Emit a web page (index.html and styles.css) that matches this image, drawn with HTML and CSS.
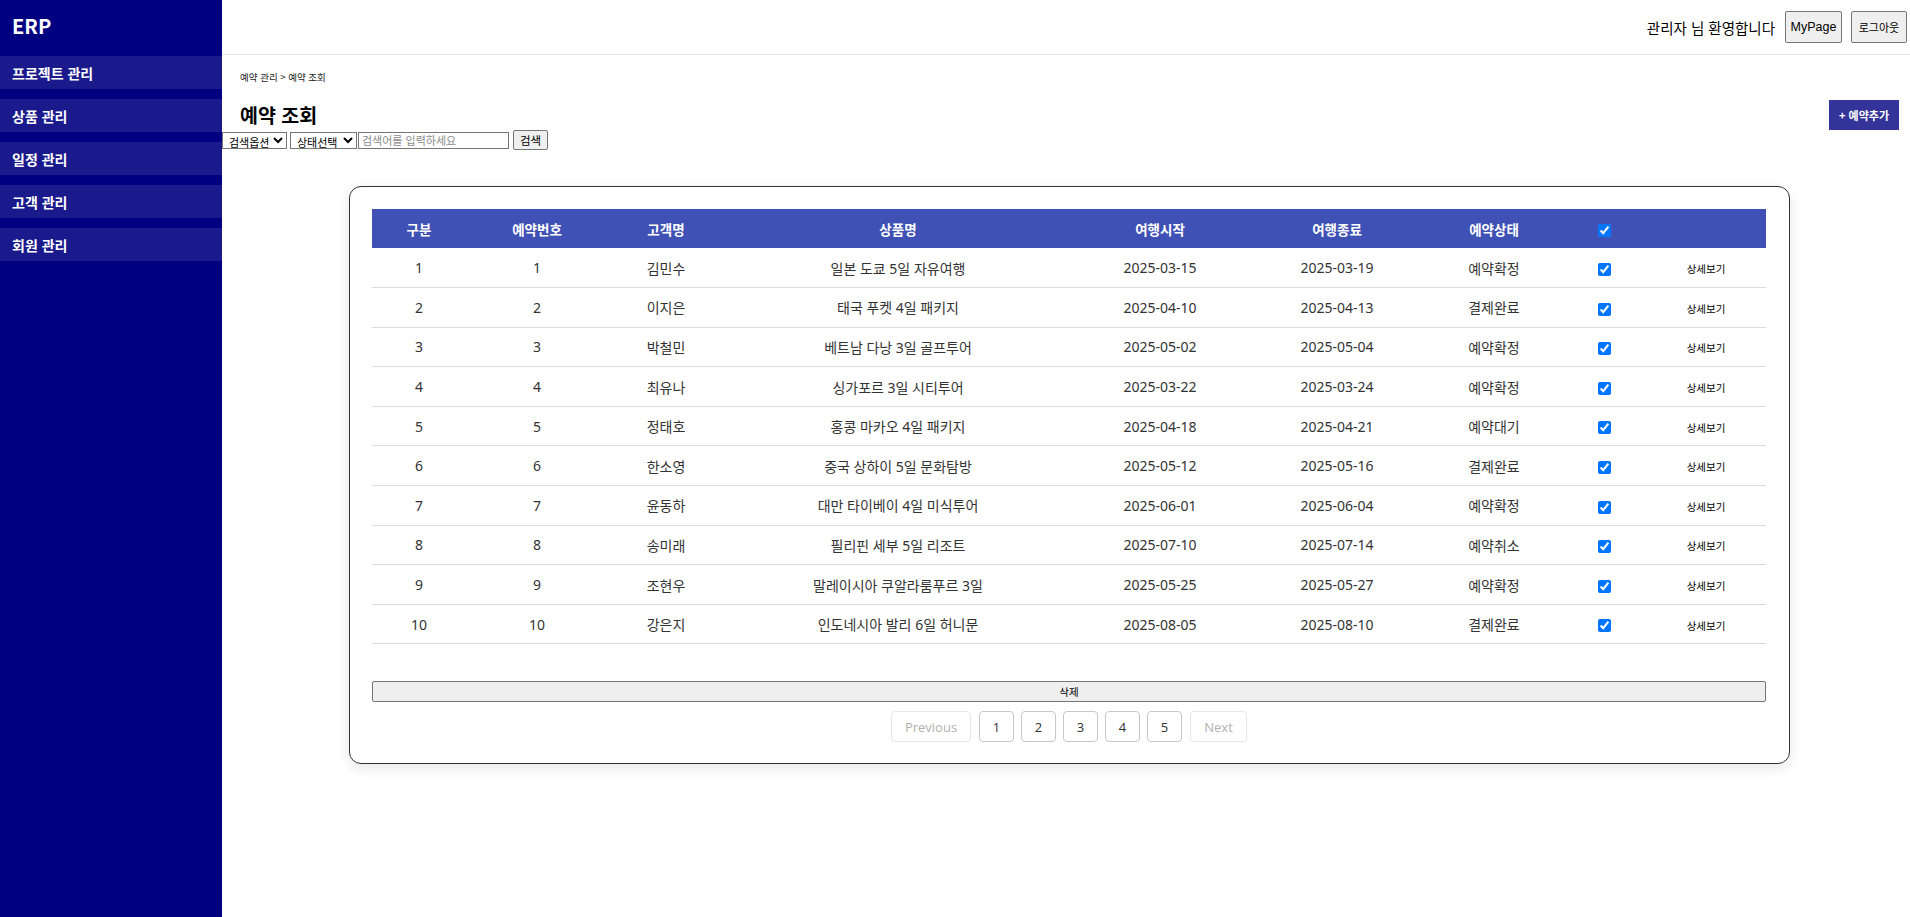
FILE: index.html
```html
<!DOCTYPE html>
<html lang="ko">
<head>
<meta charset="utf-8">
<title>예약 조회</title>
<link rel="stylesheet" href="styles.css">
</head>
<body>
<aside class="sidebar">
  <div class="logo">ERP</div>
  <nav class="menu">
    <a class="menu-item">프로젝트 관리</a>
    <a class="menu-item">상품 관리</a>
    <a class="menu-item">일정 관리</a>
    <a class="menu-item">고객 관리</a>
    <a class="menu-item">회원 관리</a>
  </nav>
</aside>
<main class="main">
  <header class="topbar">
    <span class="welcome">관리자 님 환영합니다</span>
    <button class="top-btn top-btn-en">MyPage</button>
    <button class="top-btn top-btn-ko">로그아웃</button>
  </header>
  <section class="page-head">
    <div class="breadcrumb">예약 관리 &gt; 예약 조회</div>
    <div class="title-row">
      <h2 class="title">예약 조회</h2>
      <button class="add-btn">+ 예약추가</button>
    </div>
  </section>
  <div class="filters">
    <select class="sel sel-1"><option>검색옵션</option></select>
    <select class="sel sel-2"><option>상태선택</option></select>
    <input class="search-input" type="text" placeholder="검색어를 입력하세요">
    <button class="search-btn">검색</button>
  </div>
  <div class="card">
    <table class="grid">
      <thead>
        <tr>
          <th class="c1">구분</th>
          <th class="c2">예약번호</th>
          <th class="c3">고객명</th>
          <th class="c4">상품명</th>
          <th class="c5">여행시작</th>
          <th class="c6">여행종료</th>
          <th class="c7">예약상태</th>
          <th class="c8"><input type="checkbox" checked></th>
          <th class="c9"></th>
        </tr>
      </thead>
      <tbody>
        <tr><td>1</td><td>1</td><td>김민수</td><td>일본 도쿄 5일 자유여행</td><td>2025-03-15</td><td>2025-03-19</td><td>예약확정</td><td><input type="checkbox" checked></td><td><button class="detail">상세보기</button></td></tr>
        <tr><td>2</td><td>2</td><td>이지은</td><td>태국 푸켓 4일 패키지</td><td>2025-04-10</td><td>2025-04-13</td><td>결제완료</td><td><input type="checkbox" checked></td><td><button class="detail">상세보기</button></td></tr>
        <tr><td>3</td><td>3</td><td>박철민</td><td>베트남 다낭 3일 골프투어</td><td>2025-05-02</td><td>2025-05-04</td><td>예약확정</td><td><input type="checkbox" checked></td><td><button class="detail">상세보기</button></td></tr>
        <tr><td>4</td><td>4</td><td>최유나</td><td>싱가포르 3일 시티투어</td><td>2025-03-22</td><td>2025-03-24</td><td>예약확정</td><td><input type="checkbox" checked></td><td><button class="detail">상세보기</button></td></tr>
        <tr><td>5</td><td>5</td><td>정태호</td><td>홍콩 마카오 4일 패키지</td><td>2025-04-18</td><td>2025-04-21</td><td>예약대기</td><td><input type="checkbox" checked></td><td><button class="detail">상세보기</button></td></tr>
        <tr><td>6</td><td>6</td><td>한소영</td><td>중국 상하이 5일 문화탐방</td><td>2025-05-12</td><td>2025-05-16</td><td>결제완료</td><td><input type="checkbox" checked></td><td><button class="detail">상세보기</button></td></tr>
        <tr><td>7</td><td>7</td><td>윤동하</td><td>대만 타이베이 4일 미식투어</td><td>2025-06-01</td><td>2025-06-04</td><td>예약확정</td><td><input type="checkbox" checked></td><td><button class="detail">상세보기</button></td></tr>
        <tr><td>8</td><td>8</td><td>송미래</td><td>필리핀 세부 5일 리조트</td><td>2025-07-10</td><td>2025-07-14</td><td>예약취소</td><td><input type="checkbox" checked></td><td><button class="detail">상세보기</button></td></tr>
        <tr><td>9</td><td>9</td><td>조현우</td><td>말레이시아 쿠알라룸푸르 3일</td><td>2025-05-25</td><td>2025-05-27</td><td>예약확정</td><td><input type="checkbox" checked></td><td><button class="detail">상세보기</button></td></tr>
        <tr><td>10</td><td>10</td><td>강은지</td><td>인도네시아 발리 6일 허니문</td><td>2025-08-05</td><td>2025-08-10</td><td>결제완료</td><td><input type="checkbox" checked></td><td><button class="detail">상세보기</button></td></tr>
      </tbody>
    </table>
    <button class="delete-btn">삭제</button>
    <nav class="pager">
      <button class="pg pg-text pg-prev" disabled>Previous</button>
      <button class="pg pg-num">1</button>
      <button class="pg pg-num">2</button>
      <button class="pg pg-num">3</button>
      <button class="pg pg-num">4</button>
      <button class="pg pg-num">5</button>
      <button class="pg pg-text pg-next" disabled>Next</button>
    </nav>
  </div>
</main>
</body>
</html>
```

FILE: styles.css
```css
* { box-sizing: border-box; }

html, body {
  margin: 0;
  height: 100%;
}

body {
  display: flex;
  font-family: "Noto Sans", "Noto Sans CJK KR", sans-serif;
  color: #000;
  background: #fff;
}

.sidebar {
  width: 222px;
  flex: 0 0 222px;
  min-height: 917px;
  background: #000080;
  color: #fff;
}

.logo {
  height: 56px;
  padding: 13px 12px 0;
  font-size: 20px;
  line-height: 26px;
  font-weight: 700;
  font-family: "Noto Sans CJK KR", sans-serif;
}

.menu {
  display: flex;
  flex-direction: column;
  gap: 10px;
}

.menu-item {
  display: flex;
  align-items: center;
  height: 33px;
  padding: 0 12px;
  background: rgba(255, 255, 255, 0.1);
  font-family: "Noto Sans CJK KR", sans-serif;
  font-size: 14px;
  font-weight: 700;
  color: #fff;
}

.main {
  flex: 1;
  min-width: 0;
}

.topbar {
  height: 55px;
  border-bottom: 1px solid #e3e3e3;
  display: flex;
  align-items: center;
  justify-content: flex-end;
  padding: 0 3px 0 0;
  gap: 9px;
}

.welcome {
  font-family: "Noto Sans CJK KR", sans-serif;
  font-size: 14.5px;
  margin-right: 1px;
  color: #000;
}

.top-btn {
  height: 32px;
  padding: 0;
  background: #efefef;
  border: 1px solid #767676;
  border-radius: 2px;
  color: #000;
}

.top-btn-en {
  width: 57px;
  font-family: "Liberation Sans", sans-serif;
  font-size: 12.5px;
}

.top-btn-ko {
  width: 56px;
  font-family: "Noto Sans CJK KR", sans-serif;
  font-size: 11px;
}

.page-head {
  padding: 14px 11px 0 18px;
}

.breadcrumb {
  font-family: "Noto Sans CJK KR", sans-serif;
  font-size: 9.5px;
  line-height: 16px;
  color: #222;
}

.title-row {
  display: flex;
  justify-content: space-between;
  align-items: center;
  margin-top: 15px;
  height: 30px;
}

.title {
  margin: 0;
  font-family: "Noto Sans CJK KR", sans-serif;
  font-size: 19.5px;
  font-weight: 700;
  line-height: 30px;
}

.add-btn {
  width: 70px;
  height: 30px;
  padding: 0;
  background: #333399;
  color: #fff;
  border: none;
  font-family: "Noto Sans CJK KR", sans-serif;
  font-size: 11px;
  font-weight: 700;
}

.filters {
  display: flex;
  align-items: center;
  height: 20px;
}

.sel {
  height: 17px;
  padding: 0 0 0 2px;
  font-family: "Noto Sans CJK KR", sans-serif;
  font-size: 11px;
  line-height: 14px;
  border: 1px solid #767676;
  border-radius: 0;
  background: #fff;
  color: #000;
}

.sel-1 { width: 65px; }
.sel-2 { width: 67px; margin-left: 3px; }

.search-input {
  width: 151px;
  height: 17px;
  margin-left: 1px;
  padding: 0 3px;
  font-family: "Noto Sans CJK KR", sans-serif;
  font-size: 11px;
  border: 1px solid #767676;
}

.search-input::placeholder { color: #8a8a8a; }

.search-btn {
  width: 35px;
  height: 20px;
  margin-left: 4px;
  padding: 0;
  font-family: "Noto Sans CJK KR", sans-serif;
  font-size: 11.5px;
  background: #efefef;
  border: 1px solid #767676;
  border-radius: 2px;
  color: #000;
}

.card {
  width: 1441px;
  margin: 36px 0 40px 127px;
  padding: 22px 23px 21px 22px;
  border: 1px solid #333;
  border-radius: 12px;
  box-shadow: 0 4px 14px rgba(0, 0, 0, 0.1);
  background: #fff;
}

.grid {
  width: 100%;
  border-collapse: collapse;
  table-layout: fixed;
  font-size: 14px;
  color: #333;
}

.grid th {
  height: 39px;
  background: #3f51b5;
  color: #fff;
  font-weight: 600;
  font-family: "Noto Sans CJK KR", sans-serif;
  font-size: 13.5px;
  text-align: center;
  padding: 0;
}

.grid td {
  height: 39.6px;
  border-bottom: 1px solid #dcdcdc;
  text-align: center;
  padding: 0;
  font-family: "Noto Sans", "Noto Sans CJK KR", sans-serif;
}

.grid input[type="checkbox"] {
  width: 13px;
  height: 13px;
  margin: 0;
  vertical-align: middle;
}

.c1 { width: 94px; }
.c2 { width: 142px; }
.c3 { width: 116px; }
.c4 { width: 348px; }
.c5 { width: 176px; }
.c6 { width: 178px; }
.c7 { width: 136px; }
.c8 { width: 84px; }
.c9 { width: 120px; }

.detail {
  background: transparent;
  border: none;
  padding: 0;
  font-family: "Noto Sans CJK KR", sans-serif;
  font-size: 10.5px;
  color: #000;
}

.delete-btn {
  display: block;
  width: 100%;
  height: 21px;
  margin-top: 37px;
  padding: 0;
  background: #efefef;
  border: 1px solid #767676;
  border-radius: 2px;
  font-family: "Noto Sans CJK KR", sans-serif;
  font-size: 10.5px;
  line-height: 18px;
  color: #000;
}

.pager {
  display: flex;
  justify-content: center;
  gap: 7px;
  margin-top: 9px;
}

.pg {
  height: 31px;
  background: #fff;
  border: 1px solid #c8c8c8;
  border-radius: 4px;
  font-family: "Open Sans", sans-serif;
  font-size: 13px;
  color: #333;
  padding: 0;
}

.pg-num { width: 35px; }

.pg-text {
  color: #b0b0b0;
  border-color: #e6e6e6;
}

.pg-prev { width: 80px; margin-right: 1px; }
.pg-next { width: 57px; margin-left: 1px; }
```
